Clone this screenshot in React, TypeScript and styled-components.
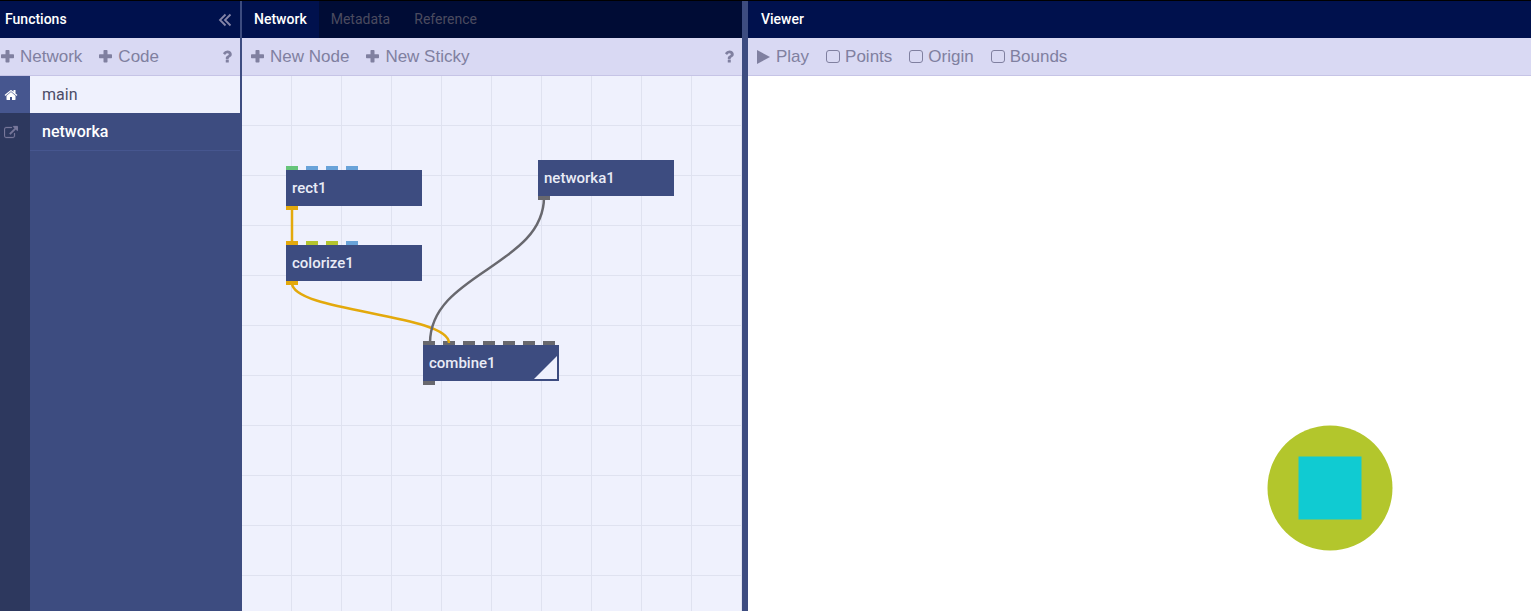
import React from "react";
import styled, { createGlobalStyle } from "styled-components";

const GlobalStyle = createGlobalStyle`
  *, *::before, *::after { box-sizing: border-box; }
  body {
    margin: 0;
    background: #3d4c80;
    font-family: Roboto, "Noto Sans", sans-serif;
    font-size: 14px;
  }
  button, input { font: inherit; margin: 0; padding: 0; }
  button { border: 0; background: none; color: inherit; cursor: pointer; }
  ul { list-style: none; margin: 0; padding: 0; }
`;

const Workspace = styled.div`
  display: grid;
  grid-template-columns: 242px 500px 6px minmax(0, 1fr);
  min-height: 100vh;
  border-top: 1px solid #000;
`;

const Pane = styled.section`
  display: flex;
  flex-direction: column;
  min-width: 0;
`;

const Sidebar = styled(Pane)`
  border-right: 2px solid #3d4c80;
`;

const Splitter = styled.div`
  background: #3d4c80;
`;

const Header = styled.header<{ $dark?: boolean; $inset?: number }>`
  display: flex;
  align-items: stretch;
  height: 37px;
  padding-left: ${(p) => p.$inset ?? 0}px;
  background: ${(p) => (p.$dark ? "#000c35" : "#00114d")};
`;

const Title = styled.h2`
  flex: 1;
  margin: 0;
  color: #fff;
  font-size: 14px;
  font-weight: 500;
  line-height: 36px;
`;

const Collapse = styled.button`
  display: flex;
  align-items: center;
  padding: 0 8px;
  color: #8585a8;
`;

const Tab = styled.button<{ $active?: boolean }>`
  padding: 0 12px 1px;
  font-size: 14px;
  font-weight: ${(p) => (p.$active ? 500 : 400)};
  color: ${(p) => (p.$active ? "#fff" : "#4b4b5f")};
  background: ${(p) => (p.$active ? "#00114d" : "transparent")};
`;

const Toolbar = styled.div<{ $inset?: number }>`
  display: flex;
  align-items: center;
  gap: 17px;
  height: 38px;
  padding: 0 8px 0 ${(p) => p.$inset ?? 0}px;
  background: #d9d9f3;
  border-bottom: 1px solid #c6c4e6;
  color: #8080a0;
  font-family: "Liberation Sans", Arial, sans-serif;
  font-size: 17px;
  line-height: 36px;
`;

const Tool = styled.button`
  display: flex;
  align-items: center;
  gap: 6px;
  white-space: nowrap;
`;

const HelpButton = styled(Tool)`
  margin-left: auto;
`;

const Toggle = styled.label`
  display: flex;
  align-items: center;
  gap: 5px;
  cursor: pointer;
`;

const Checkbox = styled.input`
  appearance: none;
  width: 14px;
  height: 13px;
  border: 1px solid #8080a0;
  border-radius: 3px;
  &:checked { background: #8080a0; }
`;

const FunctionList = styled.ul`
  flex: 1;
  background: linear-gradient(to right, #2d385e 30px, #3d4c80 30px);
`;

const FunctionRow = styled.li`
  display: grid;
  grid-template-columns: 30px 1fr;
`;

const RowIcon = styled.span<{ $active?: boolean }>`
  display: flex;
  align-items: center;
  padding: 0 4px;
  background: ${(p) => (p.$active ? "#46568f" : "transparent")};
  color: ${(p) => (p.$active ? "#fff" : "#77779a")};
`;

const RowName = styled.button<{ $active?: boolean }>`
  height: ${(p) => (p.$active ? 37 : 38)}px;
  padding: 0 12px 1px;
  text-align: left;
  font-size: 16px;
  font-weight: ${(p) => (p.$active ? 400 : 500)};
  color: ${(p) => (p.$active ? "#4c4c66" : "#fff")};
  background: ${(p) => (p.$active ? "#eff1fd" : "transparent")};
  border-bottom: ${(p) => (p.$active ? "0" : "1px solid #46568f")};
`;

const Canvas = styled.div`
  position: relative;
  flex: 1;
  overflow: hidden;
  background-color: #eff1fd;
  background-image: linear-gradient(to right, transparent 49px, #dfe2f0 49px),
    linear-gradient(to bottom, transparent 49px, #dfe2f0 49px);
  background-size: 50px 50px;
`;

const Wires = styled.svg`
  position: absolute;
  inset: 0;
  width: 100%;
  height: 100%;
  fill: none;
  stroke-width: 2.5;
  pointer-events: none;
`;

const NodeBox = styled.div<{ $x: number; $y: number }>`
  position: absolute;
  left: ${(p) => p.$x}px;
  top: ${(p) => p.$y}px;
  width: 136px;
`;

const NodeBody = styled.div`
  display: flex;
  justify-content: space-between;
  align-items: center;
  height: 36px;
  padding: 0 2px 0 6px;
  background: #3d4c80;
  color: #e9ebf6;
  font-size: 15px;
  font-weight: 500;
  line-height: 36px;
`;

const RenderedFlag = styled.svg`
  align-self: flex-end;
  width: 23px;
  height: 25px;
  fill: #eff1fd;
`;

const Ports = styled.div`
  display: flex;
  gap: 8px;
  height: 4px;
`;

const Port = styled.i<{ $color: string }>`
  width: 12px;
  background: ${(p) => p.$color};
`;

const Stage = styled.div`
  position: relative;
  flex: 1;
  overflow: hidden;
  background: #fff;
`;

const Drawing = styled.svg`
  position: absolute;
  inset: 0;
  width: 100%;
  height: 100%;
`;

const glyphs = {
  help: "M1088 1256v240q0 16-12 28t-28 12h-240q-16 0-28-12t-12-28v-240q0-16 12-28t28-12h240q16 0 28 12t12 28zm316-600q0 54-15.5 101t-35 76.5-55 59.5-57.5 43.5-61 35.5q-41 23-68.5 65t-27.5 67q0 17-12 32.5t-28 15.5h-240q-15 0-25.5-18.5t-10.5-37.5v-45q0-83 65-156.5t143-108.5q59-27 84-56t25-76q0-42-46.5-74t-107.5-32q-65 0-108 29-35 25-107 115-13 16-31 16-12 0-25-8l-164-125q-13-10-15.5-25t5.5-28q160-266 464-266 80 0 161 31t146 83 106 127.5 41 158.5z",
  home: "M1472 992v480q0 26-19 45t-45 19h-384v-384h-256v384h-384q-26 0-45-19t-19-45v-480q0-1 .5-3t.5-3l575-474 575 474q1 2 1 6zm223-69l-62 74q-8 9-21 11h-3q-13 0-21-7l-692-577-692 577q-12 8-24 7-13-2-21-11l-62-74q-8-10-7-23.5t11-21.5l719-599q32-26 76-26t76 26l244 204v-195q0-14 9-23t23-9h192q14 0 23 9t9 23v408l219 182q10 8 11 21.5t-7 23.5z",
  external: "M1408 928v320q0 119-84.5 203.5t-203.5 84.5h-832q-119 0-203.5-84.5t-84.5-203.5v-832q0-119 84.5-203.5t203.5-84.5h704q14 0 23 9t9 23v64q0 14-9 23t-23 9h-704q-66 0-113 47t-47 113v832q0 66 47 113t113 47h832q66 0 113-47t47-113v-320q0-14 9-23t23-9h64q14 0 23 9t9 23zm384-864v512q0 26-19 45t-45 19-45-19l-176-176-652 652q-10 10-23 10t-23-10l-114-114q-10-10-10-23t10-23l652-652-176-176q-19-19-19-45t19-45 45-19h512q26 0 45 19t19 45z",
};

const PlusIcon = () => (
  <svg width="13" height="13" viewBox="0 0 13 13" fill="currentColor" aria-hidden="true">
    <rect x="4.5" width="4" height="12.5" rx="0.7" />
    <rect y="4.2" width="13" height="4" rx="0.7" />
  </svg>
);

const HelpIcon = () => (
  <svg width="10" height="13" viewBox="370 240 1060 1300" fill="currentColor" aria-hidden="true">
    <path d={glyphs.help} />
  </svg>
);

const HomeIcon = () => (
  <svg width="14" height="14" viewBox="60 0 1672 1792" fill="currentColor" aria-hidden="true">
    <path d={glyphs.home} />
  </svg>
);

const ExternalIcon = () => (
  <svg width="14" height="14" viewBox="0 -128 1792 1792" fill="currentColor" stroke="currentColor" strokeWidth="30" aria-hidden="true">
    <path d={glyphs.external} />
  </svg>
);

const AMBER = "#e3a90c";
const BLUE = "#69a3d9";
const GREEN = "#66c47a";
const LIME = "#b4c42e";
const GRAY = "#68686e";

const nodes = [
  { name: "rect1", x: 44, y: 90, inputs: [GREEN, BLUE, BLUE, BLUE], output: AMBER },
  { name: "colorize1", x: 44, y: 165, inputs: [AMBER, LIME, LIME, BLUE], output: AMBER },
  { name: "networka1", x: 296, y: 80, inputs: [], output: GRAY },
  { name: "combine1", x: 181, y: 265, inputs: Array(7).fill(GRAY), output: GRAY, rendered: true },
];

export default function App() {
  return (
    <Workspace>
      <GlobalStyle />
      <Sidebar>
        <Header $inset={5}>
          <Title>Functions</Title>
          <Collapse aria-label="Collapse functions">
            <svg width="14" height="14" viewBox="0 0 14 14" fill="none" stroke="currentColor" strokeWidth="1.8" aria-hidden="true">
              <path d="M7.5 1.5L2 7l5.500 5.500M12.500 1.500L7 7l5.500 5.500" />
            </svg>
          </Collapse>
        </Header>
        <Toolbar $inset={1}>
          <Tool><PlusIcon />Network</Tool>
          <Tool><PlusIcon />Code</Tool>
          <HelpButton aria-label="Functions help"><HelpIcon /></HelpButton>
        </Toolbar>
        <FunctionList>
          <FunctionRow>
            <RowIcon $active><HomeIcon /></RowIcon>
            <RowName $active>main</RowName>
          </FunctionRow>
          <FunctionRow>
            <RowIcon><ExternalIcon /></RowIcon>
            <RowName>networka</RowName>
          </FunctionRow>
        </FunctionList>
      </Sidebar>

      <Pane>
        <Header $dark>
          <Tab $active>Network</Tab>
          <Tab>Metadata</Tab>
          <Tab>Reference</Tab>
        </Header>
        <Toolbar $inset={9}>
          <Tool><PlusIcon />New Node</Tool>
          <Tool><PlusIcon />New Sticky</Tool>
          <HelpButton aria-label="Network help"><HelpIcon /></HelpButton>
        </Toolbar>
        <Canvas>
          {nodes.map((node) => (
            <NodeBox key={node.name} $x={node.x} $y={node.y}>
              <Ports>{node.inputs.map((color, i) => <Port key={i} $color={color} />)}</Ports>
              <NodeBody>
                {node.name}
                {node.rendered && (
                  <RenderedFlag viewBox="0 0 23 25" aria-hidden="true">
                    <path d="M23 0v23H0z" />
                  </RenderedFlag>
                )}
              </NodeBody>
              <Ports><Port $color={node.output} /></Ports>
            </NodeBox>
          ))}
          <Wires aria-hidden="true">
            <path d="M50 132V167" stroke={AMBER} />
            <path d="M50 207C50 236 207 238 207 267" stroke={AMBER} />
            <path d="M302 121C302 190 188 197 188 267" stroke={GRAY} />
          </Wires>
        </Canvas>
      </Pane>

      <Splitter />

      <Pane>
        <Header $inset={13}>
          <Title>Viewer</Title>
        </Header>
        <Toolbar $inset={9}>
          <Tool>
            <svg width="13" height="14" viewBox="0 0 13 14" fill="currentColor" aria-hidden="true">
              <path d="M0 0L13 7L0 14z" />
            </svg>
            Play
          </Tool>
          <Toggle><Checkbox type="checkbox" />Points</Toggle>
          <Toggle><Checkbox type="checkbox" />Origin</Toggle>
          <Toggle><Checkbox type="checkbox" />Bounds</Toggle>
        </Toolbar>
        <Stage>
          <Drawing role="img" aria-label="Rendered shapes">
            <circle cx="582" cy="412" r="62.5" fill="#b3c62c" />
            <rect x="550.5" y="380.5" width="63" height="63" fill="#10cbd2" />
          </Drawing>
        </Stage>
      </Pane>
    </Workspace>
  );
}
